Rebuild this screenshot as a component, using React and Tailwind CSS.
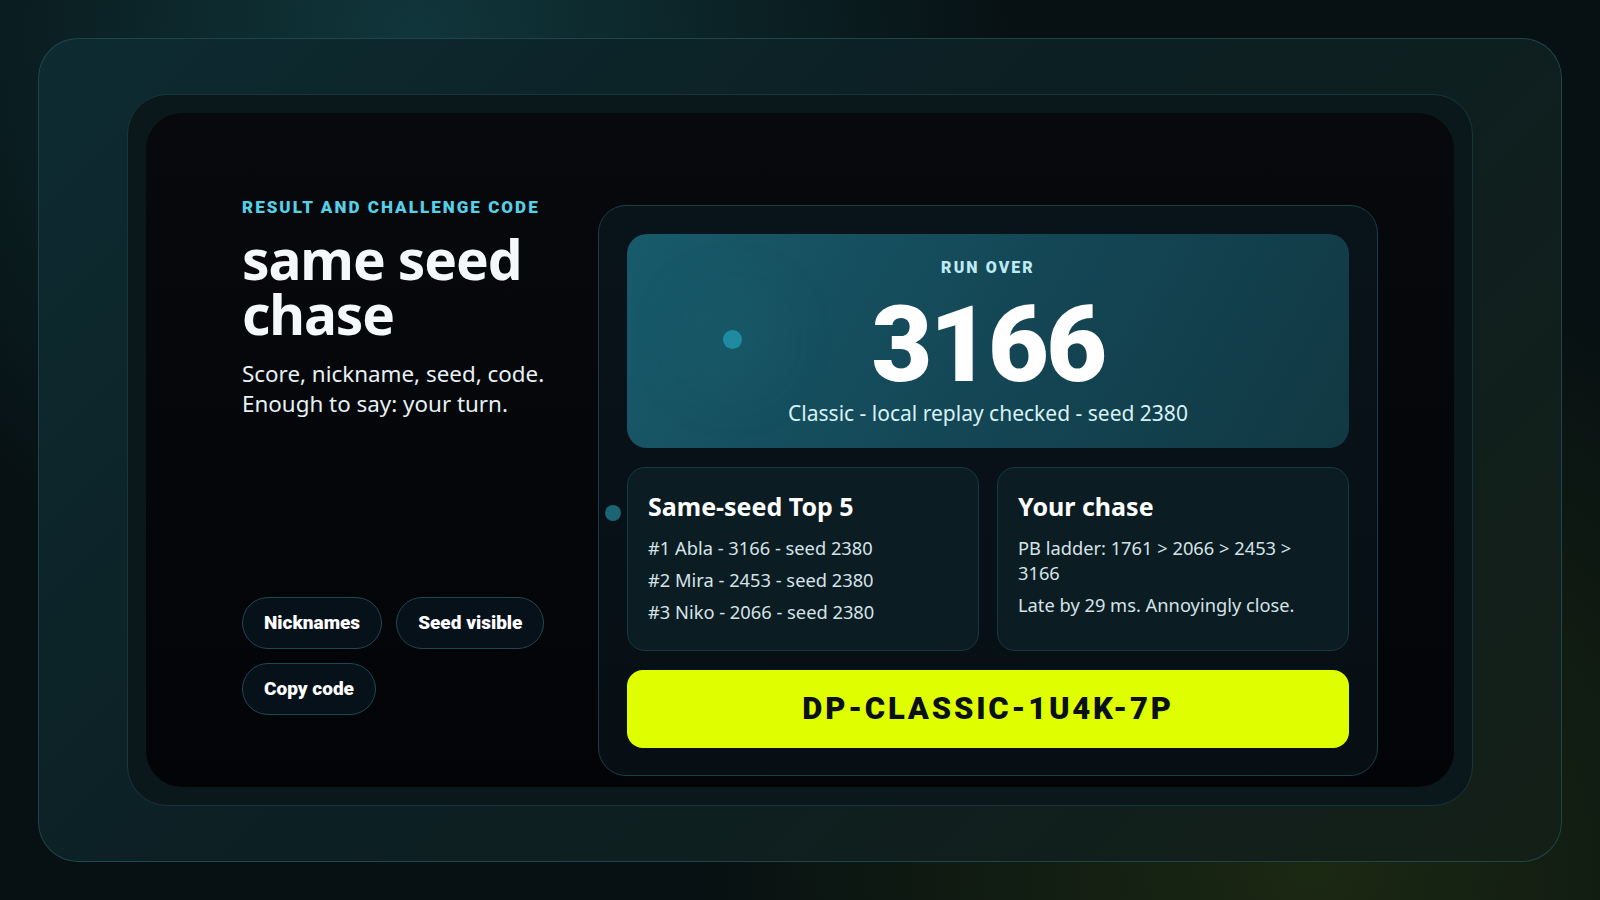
const heavy = "font-['Roboto',sans-serif] font-black"

const Pill = ({ children }) => (
    <button className={`h-[52px] px-[21px] rounded-full border border-[#1d4850] bg-[#07111a] text-white text-[19px] ${heavy}`}>
        {children}
    </button>
)

const Card = ({ title, lines }) => (
    <div className="rounded-[18px] border border-[#173a42] bg-[#0b1c23] px-[20px] pt-[23px]">
        <h3 className="text-white text-[25px] leading-[31px] font-bold">{title}</h3>
        <div className="mt-[13px] flex flex-col gap-[7px]">
            {lines.map((l) => (
                <p key={l} className="text-[#d5e3e8] text-[18.3px] leading-[25px]">{l}</p>
            ))}
        </div>
    </div>
)

const App = () => {
    return (
        <div className="h-screen w-full overflow-hidden p-[38px] bg-[#071012] bg-[radial-gradient(circle_at_26%_4%,#10363b_0%,transparent_42%),radial-gradient(circle_at_82%_96%,#1b2812_0%,transparent_40%)] font-['Noto_Sans',sans-serif]">
            <div className="h-full rounded-[40px] border border-[#24555c]/70 bg-[linear-gradient(135deg,#0d2b31_0%,#0c1f23_45%,#141f17_100%)] px-[88px] py-[55px]">
                <div className="h-full rounded-[40px] border border-[#17363b] bg-[#0a181c] p-[18px]">
                    <div className="h-full rounded-[36px] bg-[linear-gradient(180deg,#07090d_0%,#020407_100%)] flex items-start pl-[96px] pr-[76px] pt-[84px]">

                        <div className="w-[356px] shrink-0">
                            <p className={`text-[#56d0e6] text-[17px] leading-[20px] tracking-[0.12em] uppercase ${heavy}`}>
                                Result and challenge code
                            </p>
                            <h1 className="mt-[14px] text-[#f4f8fb] text-[55px] leading-[55px] font-bold tracking-[-0.02em]">
                                <span className="block">same seed</span>
                                <span className="block">chase</span>
                            </h1>
                            <p className="mt-[18px] text-[#e6f1f5] text-[22.4px] leading-[30px]">
                                Score, nickname, seed, code.<br />Enough to say: your turn.
                            </p>
                            <div className="mt-[178px] flex flex-wrap gap-x-[14px] gap-y-[14px]">
                                <Pill>Nicknames</Pill>
                                <Pill>Seed visible</Pill>
                                <Pill>Copy code</Pill>
                            </div>
                        </div>

                        <div className="relative mt-[8px] w-[780px] h-[571px] shrink-0 rounded-[28px] border border-[#1b3d45] bg-[linear-gradient(180deg,#09131a_0%,#070f15_100%)] p-[28px] flex flex-col gap-[19px]">
                            <span className="absolute left-[6px] top-[299px] w-[16px] h-[16px] rounded-full bg-[#1b6474]"></span>

                            <div className="relative h-[214px] shrink-0 rounded-[20px] bg-[linear-gradient(120deg,#185b6b_0%,#144756_50%,#113843_100%)] flex flex-col items-center pt-[24px] overflow-hidden">
                                <span className="absolute left-[96px] top-[96px] w-[19px] h-[19px] rounded-full bg-[#1f8ba0] shadow-[0_0_70px_40px_rgba(40,150,170,0.07)]"></span>
                                <p className={`text-[#bfeaf2] text-[16px] leading-[20px] tracking-[0.13em] uppercase ${heavy}`}>Run over</p>
                                <p className={`mt-[15px] text-white text-[105px] leading-[105px] tracking-[-0.025em] ${heavy}`}>3166</p>
                                <p className="mt-[1px] text-[#d7f2f6] text-[21px] leading-[28px]">
                                    Classic - local replay checked - seed 2380
                                </p>
                            </div>

                            <div className="grid grid-cols-2 gap-[18px] h-[184px] shrink-0">
                                <Card
                                    title="Same-seed Top 5"
                                    lines={["#1 Abla - 3166 - seed 2380", "#2 Mira - 2453 - seed 2380", "#3 Niko - 2066 - seed 2380"]}
                                />
                                <Card
                                    title="Your chase"
                                    lines={["PB ladder: 1761 > 2066 > 2453 > 3166", "Late by 29 ms. Annoyingly close."]}
                                />
                            </div>

                            <div className="h-[78px] shrink-0 rounded-[16px] bg-[#dfff00] flex items-center justify-center">
                                <span className={`text-[#0a1015] text-[31px] tracking-[0.09em] ${heavy}`}>DP-CLASSIC-1U4K-7P</span>
                            </div>
                        </div>

                    </div>
                </div>
            </div>
        </div>
    )
}
export default App
